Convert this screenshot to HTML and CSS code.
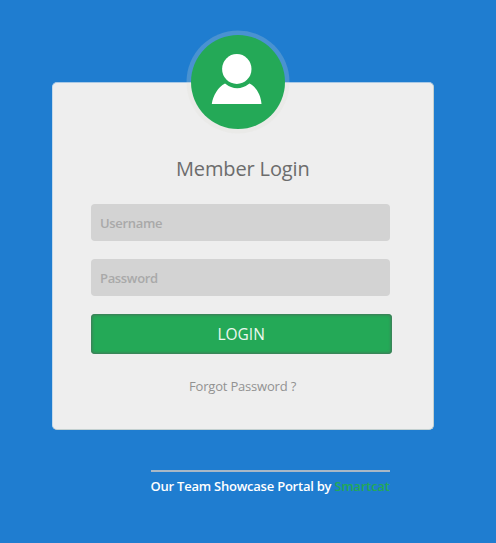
FILE: index.html
```html
<!DOCTYPE html>
<html lang="en">
<head>
<meta charset="utf-8">
<title>Member Login</title>
<link rel="stylesheet" href="styles.css">
</head>
<body>
<main class="card">
  <div class="avatar">
    <svg viewBox="0 0 95 95" width="95" height="95" aria-hidden="true">
      <ellipse cx="45.8" cy="34" rx="14.7" ry="15"/>
      <path d="M20.800 69C22 60.500 27 52 34 48.500Q46 58 58.500 48.500C65.500 52 70 60.500 70.500 69Z"/>
    </svg>
  </div>
  <h1 class="title">Member Login</h1>
  <form class="form">
    <input class="field" type="text" placeholder="Username">
    <input class="field" type="password" placeholder="Password">
    <button class="submit" type="button">LOGIN</button>
  </form>
  <a class="forgot">Forgot Password ?</a>
</main>
<footer class="credit">Our Team Showcase Portal by <a class="brand">Smartcat</a></footer>
</body>
</html>
```
FILE: styles.css
```css
* { box-sizing: border-box; }
html, body { height: 100%; }
body {
  margin: 0;
  padding-top: 82px;
  background: #1f7dd0;
  font-family: "Open Sans", "Noto Sans", sans-serif;
  overflow: hidden;
}
.card {
  width: 382px;
  height: 348px;
  margin-left: 52px;
  padding: 0 42px 0 39px;
  border: 1px solid #c3d0d0;
  border-top-color: #a9c9e6;
  border-left-color: #c4d9ea;
  border-radius: 5px;
  background: #eee;
  display: flex;
  flex-direction: column;
}
.avatar {
  flex: none;
  width: 94.5px;
  height: 94.5px;
  margin: -48.5px 0 0 98.7px;
  border-radius: 50%;
  background: #24a957;
  box-shadow: 0 0 0 4.5px rgba(222, 222, 216, .22);
}
.avatar svg { display: block; fill: #fff; }
.title {
  margin: 25px 0 0 84px;
  font-size: 20px;
  line-height: 30px;
  font-weight: 400;
  letter-spacing: -.14px;
  color: #6c6c6c;
  white-space: nowrap;
}
.form {
  margin: 20px 0 0 -1.4px;
  display: flex;
  flex-direction: column;
  gap: 18px;
}
.field {
  width: 299.4px;
  height: 37px;
  padding: 0 9.4px;
  border: 0;
  border-radius: 4px;
  background: #d3d3d3;
  font: 600 13px "Open Sans", sans-serif;
  letter-spacing: -.33px;
}
.field::placeholder { color: #a9a9a9; opacity: 1; }
.submit {
  width: 301px;
  height: 40px;
  padding: 0;
  border: 0;
  border-radius: 4px;
  background: #24a957;
  box-shadow: inset 0 0 3px 1px #45735a;
  color: #edf7ef;
  font: 400 15.5px "Open Sans", sans-serif;
}
.forgot {
  margin: 22px 0 0 97px;
  font-size: 13px;
  line-height: 20px;
  letter-spacing: -.19px;
  color: #929292;
  white-space: nowrap;
}
.credit {
  width: 239.5px;
  margin: 40px 0 0 150.5px;
  padding-top: 4px;
  border-top: 2px solid #a9b8c6;
  font-size: 13px;
  line-height: 20px;
  font-weight: 600;
  letter-spacing: -.23px;
  color: #fff;
  white-space: nowrap;
}
.brand { color: #24a957; }
```
